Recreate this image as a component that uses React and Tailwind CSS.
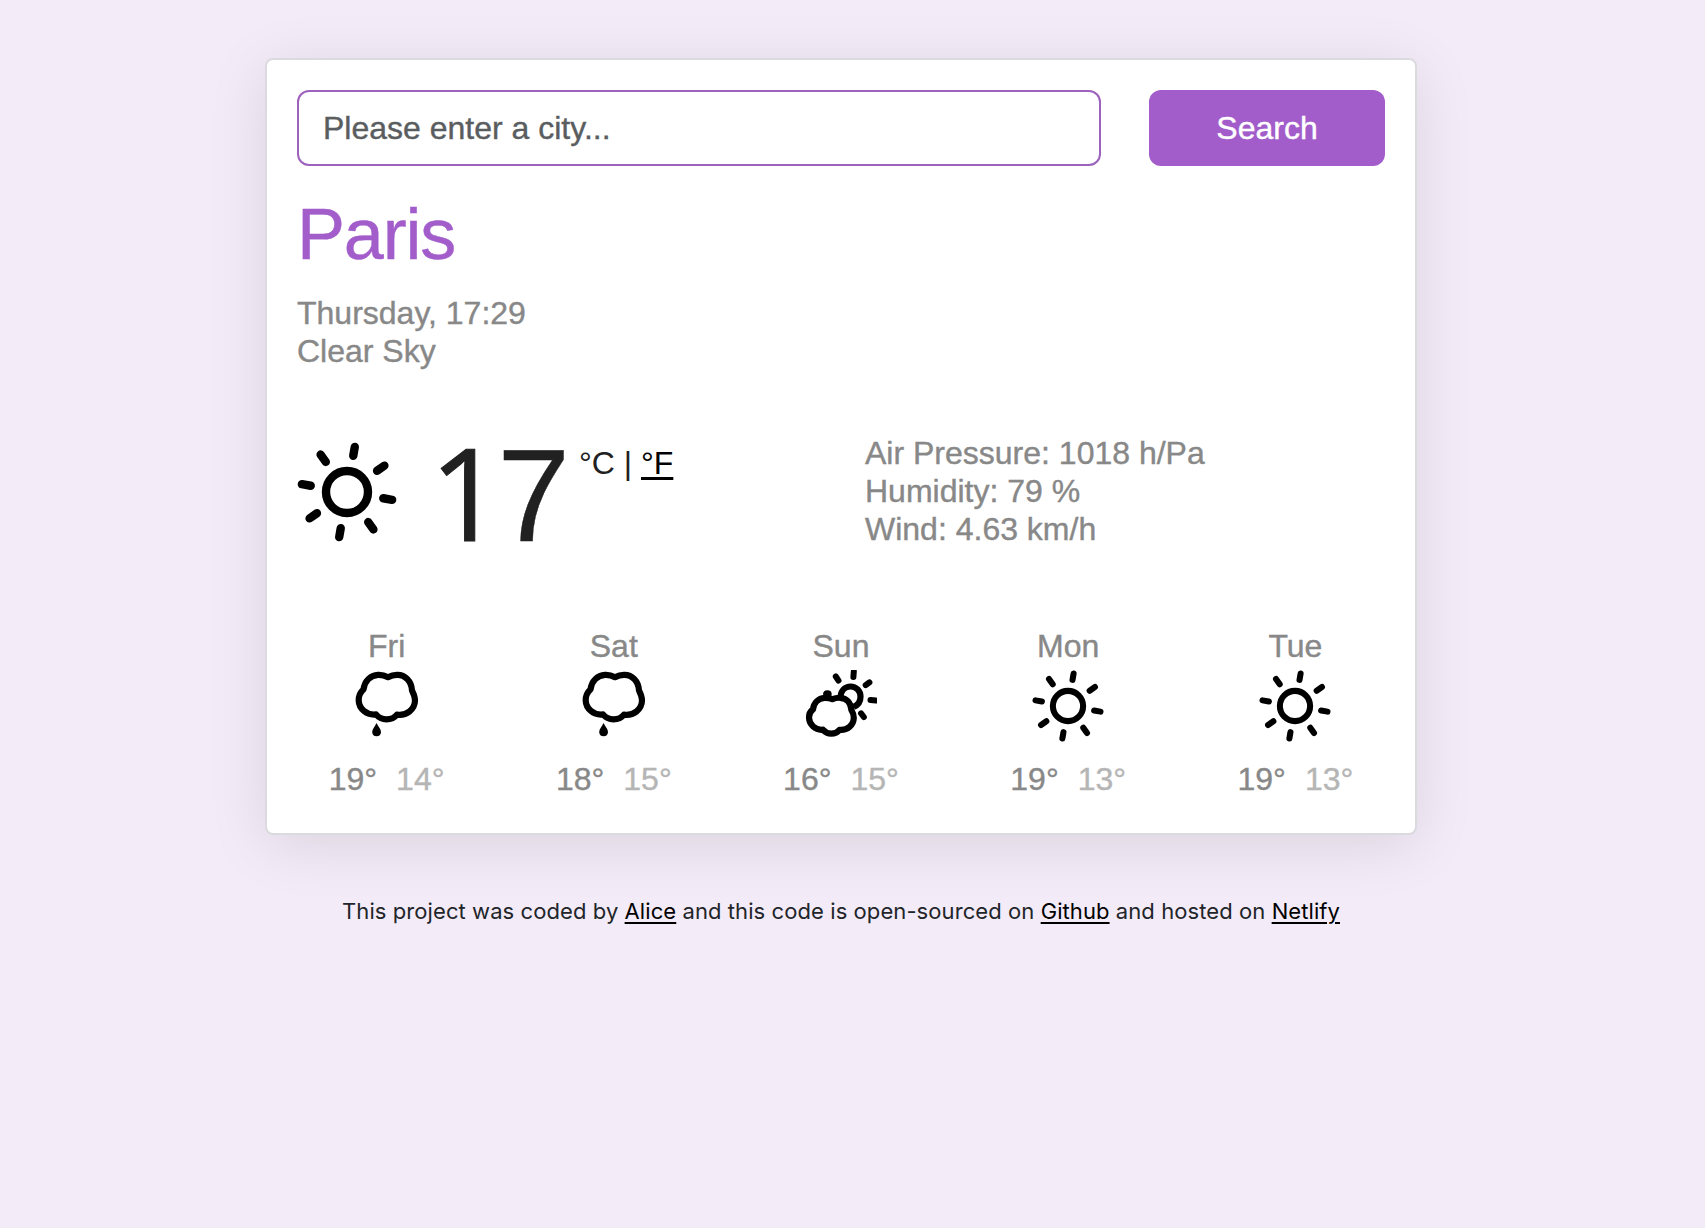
const RAYS = [9.8, 54.8, 99.8, 144.8, 189.8, 234.8, 279.8, 324.8];

function SunIcon({ className }) {
  return (
    <svg viewBox="0 0 100 100" className={className} fill="none" stroke="black" strokeWidth="8.4" strokeLinecap="round">
      <circle cx="50" cy="50" r="21" strokeWidth="8.4" />
      {RAYS.map((a) => (
        <path key={a} d="M50 13.2V4.2" transform={`rotate(${a} 50 50)`} />
      ))}
    </svg>
  );
}

function RainIcon({ className }) {
  return (
    <svg viewBox="1 0 72 72" className={className} fill="none" stroke="black" strokeWidth="6.2" strokeLinejoin="round">
      <path d="M38 7.2C35 5.6 31.500 4.700 28 4.900C20.500 5.300 14.500 11 13.600 19.200C10 22.500 8.500 26 8.700 30.500C9 38.500 16.500 45.500 26 44.400C28.500 47.500 32 49.300 36.500 49.300C41 49.300 44.500 47.800 47 44.600C56.500 46 64.800 39.500 65 30.500C65 26.500 63.700 24 62 20.500C61.500 11 55 5 47.500 4.900C44 4.800 41 5.600 38 7.200Z" />
      <path d="M26.500 53C28.200 56.500 31 59 31 62C31 64.700 29.200 66.300 26.600 66.300C24 66.300 22.200 64.700 22.200 62C22.200 59 25 56.500 26.500 53Z" fill="black" stroke="none" />
    </svg>
  );
}

function PartlyCloudyIcon({ className }) {
  return (
    <svg viewBox="0.8 0 72 72" className={className} fill="none" stroke="black" strokeWidth="6.2" strokeLinejoin="round">
      <path d="M28.200 29.200C26 28.200 23.500 27.700 20.500 27.800C14 28.200 9.500 33 8.800 39.300C6 41.500 4.700 44 4.800 47.500C5 54.500 11 60.500 18.800 59.700C21 62.300 23.500 63.600 27 63.600C30.500 63.600 33.300 62.400 35.300 59.800C43 60.700 49.500 55 49.600 47.700C49.600 44.500 48.700 42.500 47.200 40C46.700 33 42.500 28.200 36 27.800C33 27.600 30.500 28.200 28.200 29.200Z" />
      <path d="M36.300 26.500C37 20.500 41 16.500 46.300 16.500C52 16.500 56.300 21 56.300 26.700C56.300 31.500 53.800 35 49.500 36.800" />
      <ellipse cx="23.200" cy="24" rx="4.300" ry="3.800" fill="black" stroke="none" />
      <path d="M31.600 6.500L34.300 10.600M49.600 1.500L49.200 7M65.200 12.300L61.500 15.200M71.800 30.600L66.300 30.100M56.800 43.300L59.600 47" strokeWidth="6" strokeLinecap="round" />
    </svg>
  );
}

const FORECAST = [
  { day: "Fri", Icon: RainIcon, max: 19, min: 14 },
  { day: "Sat", Icon: RainIcon, max: 18, min: 15 },
  { day: "Sun", Icon: PartlyCloudyIcon, max: 16, min: 15 },
  { day: "Mon", Icon: SunIcon, max: 19, min: 13 },
  { day: "Tue", Icon: SunIcon, max: 19, min: 13 },
];

function FooterLink({ children }) {
  return (
    <a href="#" className="text-black underline decoration-2 underline-offset-[3px]">
      {children}
    </a>
  );
}

export default function App() {
  return (
    <div className="flex min-h-screen flex-col items-center bg-[#f3ebf7] pt-[58px] pr-[23px] font-['Liberation_Sans',Arial,sans-serif] text-[32px] leading-[38px] text-[#888888]">
      <main className="h-[777px] w-[1152px] rounded-lg border-2 border-[#dadadf] bg-white p-[30px] shadow-[0_10px_60px_rgba(0,0,0,0.1)] [-webkit-text-stroke-width:0.4px]">
        <form className="flex justify-between">
          <input
            type="text"
            placeholder="Please enter a city..."
            className="h-[76px] w-[804px] rounded-xl border-2 border-[#9c62bd] bg-white px-6 outline-none placeholder:text-[#5a5d60]"
          />
          <button type="button" className="h-[76px] w-[236px] rounded-xl bg-[#a25dcb] text-white">
            Search
          </button>
        </form>

        <h1 className="mt-[25px] text-[72px] leading-[86px] tracking-[-1.2px] text-[#a25dcb]">Paris</h1>
        <p className="mt-[17px]">Thursday, 17:29</p>
        <p>Clear Sky</p>

        <section className="mt-[64px] grid grid-cols-[568px_1fr]">
          <div className="flex pt-[8px]">
            <SunIcon className="size-[100px] blur-[0.6px]" />
            <span className="ml-[30px] -mt-[1px] flex h-[100px] w-[142px] items-baseline justify-end text-[131px] leading-[100px] text-[#212121]">
              <span className="font-['Open_Sans',sans-serif] text-[129px] [-webkit-text-stroke-width:1px]">1</span>
              <span className="-mr-[1px] -ml-[6px]">7</span>
            </span>
            <span className="ml-[10px] mt-[2px] text-[#212121] [-webkit-text-stroke-width:0px]">
              °C |{" "}
              <a href="#" className="text-black underline decoration-[3px] underline-offset-[3px]">
                °F
              </a>
            </span>
          </div>
          <div>
            <p>Air Pressure: 1018 h/Pa</p>
            <p>Humidity: 79 %</p>
            <p>Wind: 4.63 km/h</p>
          </div>
        </section>

        <section className="-mx-6 mt-[79px] grid grid-cols-5">
          {FORECAST.map(({ day, Icon, max, min }) => (
            <div key={day} className="flex flex-col items-center">
              <span>{day}</span>
              <Icon className="mt-[5px] size-[72px] blur-[0.6px]" />
              <div className="mt-[18px] flex gap-[19px]">
                <span>{max}°</span>
                <span className="text-[#b5b5b5]">{min}°</span>
              </div>
            </div>
          ))}
        </section>
      </main>

      <footer className="mt-[60px] whitespace-nowrap font-[Inter,sans-serif] text-[22px] leading-[33px] tracking-[0.08px] text-[#212529]">
        This project was coded by <FooterLink>Alice</FooterLink> and this code is open-sourced on{" "}
        <FooterLink>Github</FooterLink> and hosted on <FooterLink>Netlify</FooterLink>
      </footer>
    </div>
  );
}
